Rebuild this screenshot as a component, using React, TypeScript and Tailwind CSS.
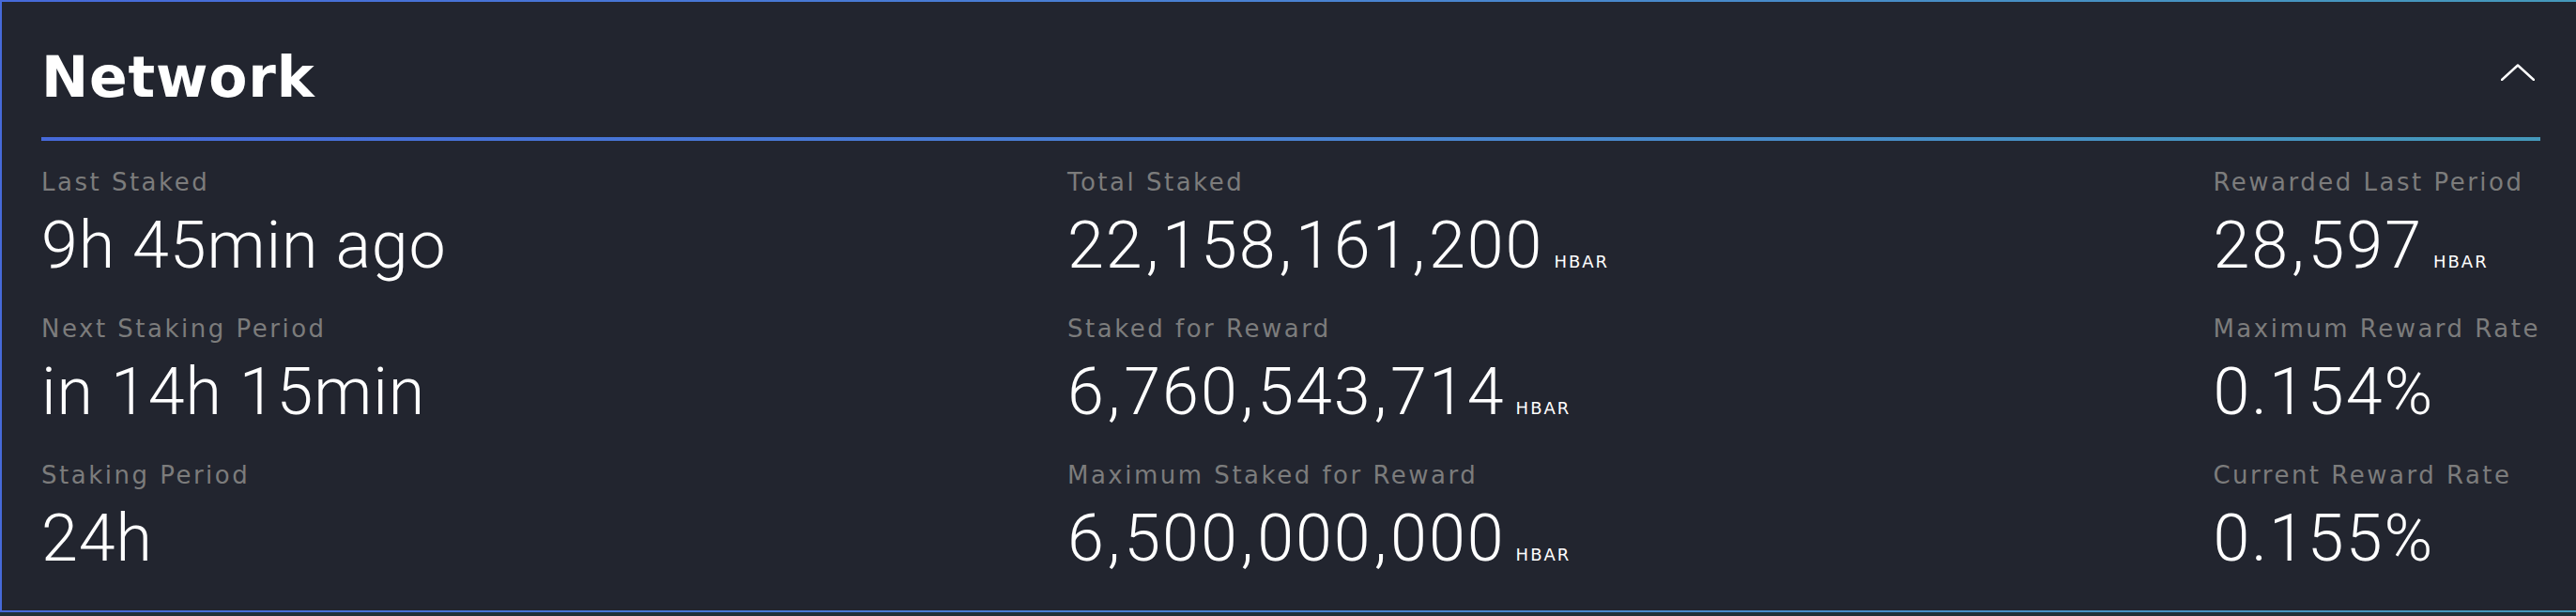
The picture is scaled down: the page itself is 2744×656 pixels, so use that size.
import React from 'react';

type Stat = {
  label: string;
  value: string;
  unit?: string;
  numeric?: boolean;
};

const columns: Stat[][] = [
  [
    { label: 'Last Staked', value: '9h 45min ago' },
    { label: 'Next Staking Period', value: 'in 14h 15min' },
    { label: 'Staking Period', value: '24h' },
  ],
  [
    { label: 'Total Staked', value: '22,158,161,200', unit: 'HBAR', numeric: true },
    { label: 'Staked for Reward', value: '6,760,543,714', unit: 'HBAR', numeric: true },
    { label: 'Maximum Staked for Reward', value: '6,500,000,000', unit: 'HBAR', numeric: true },
  ],
  [
    { label: 'Rewarded Last Period', value: '28,597', unit: 'HBAR', numeric: true },
    { label: 'Maximum Reward Rate', value: '0.154%', numeric: true },
    { label: 'Current Reward Rate', value: '0.155%', numeric: true },
  ],
];

function Amount({ value }: { value: string }) {
  const parts = value.split(',');
  return (
    <>
      {parts.map((part, i) => (
        <React.Fragment key={i}>
          {i > 0 && <span className="px-[2px]">,</span>}
          {part}
        </React.Fragment>
      ))}
    </>
  );
}

function StatItem({ stat }: { stat: Stat }) {
  return (
    <div className="flex flex-col">
      <span className="font-['DejaVu_Sans',sans-serif] text-[26px] leading-[32px] tracking-[2.5px] text-[#7c7c7c] whitespace-nowrap">
        {stat.label}
      </span>
      <div className="mt-[11px] flex items-baseline whitespace-nowrap">
        {stat.numeric ? (
          <span className="font-['Roboto',sans-serif] font-light text-[70px] leading-[80px] tracking-[2px] text-white">
            <Amount value={stat.value} />
          </span>
        ) : (
          <span className="font-['Roboto',sans-serif] font-light text-[70px] leading-[80px] tracking-[0.9px] text-white">
            {stat.value}
          </span>
        )}
        {stat.unit && (
          <span className="ml-[11px] font-['DejaVu_Sans',sans-serif] text-[18px] tracking-[2px] text-white">
            {stat.unit}
          </span>
        )}
      </div>
    </div>
  );
}

function ChevronUp() {
  return (
    <svg width="36" height="18" viewBox="0 0 36 18" fill="none" className="mt-[16px] mr-[6px]">
      <polyline points="1,17 18,1.5 35,17" stroke="white" strokeWidth="2.4" strokeLinecap="round" strokeLinejoin="round" />
    </svg>
  );
}

export default function App() {
  return (
    <div className="w-[2744px] h-[656px] bg-[#1f3038] overflow-hidden">
      <div className="w-[2744px] pl-[2px] pt-[2px] pb-[2px] bg-gradient-to-r from-[#4669d9] via-[#4a82d2] to-[#4599bb]">
        <div className="bg-[#22252f] pl-[42px] pr-[38px] pt-[50px] pb-[37px]">
          <div className="flex items-start justify-between">
            <h2 className="font-['DejaVu_Sans',sans-serif] font-bold text-[60px] leading-[60px] tracking-[0.8px] text-white">
              Network
            </h2>
            <ChevronUp />
          </div>
          <div className="mt-[34px] h-[4px] bg-gradient-to-r from-[#4669d9] via-[#4a82d2] to-[#4599bb]" />
          <div className="mt-[28px] grid grid-cols-[1093px_1fr_auto]">
            {columns.map((col, i) => (
              <div key={i} className="flex flex-col gap-[33px]">
                {col.map((stat) => (
                  <StatItem key={stat.label} stat={stat} />
                ))}
              </div>
            ))}
          </div>
        </div>
      </div>
    </div>
  );
}
